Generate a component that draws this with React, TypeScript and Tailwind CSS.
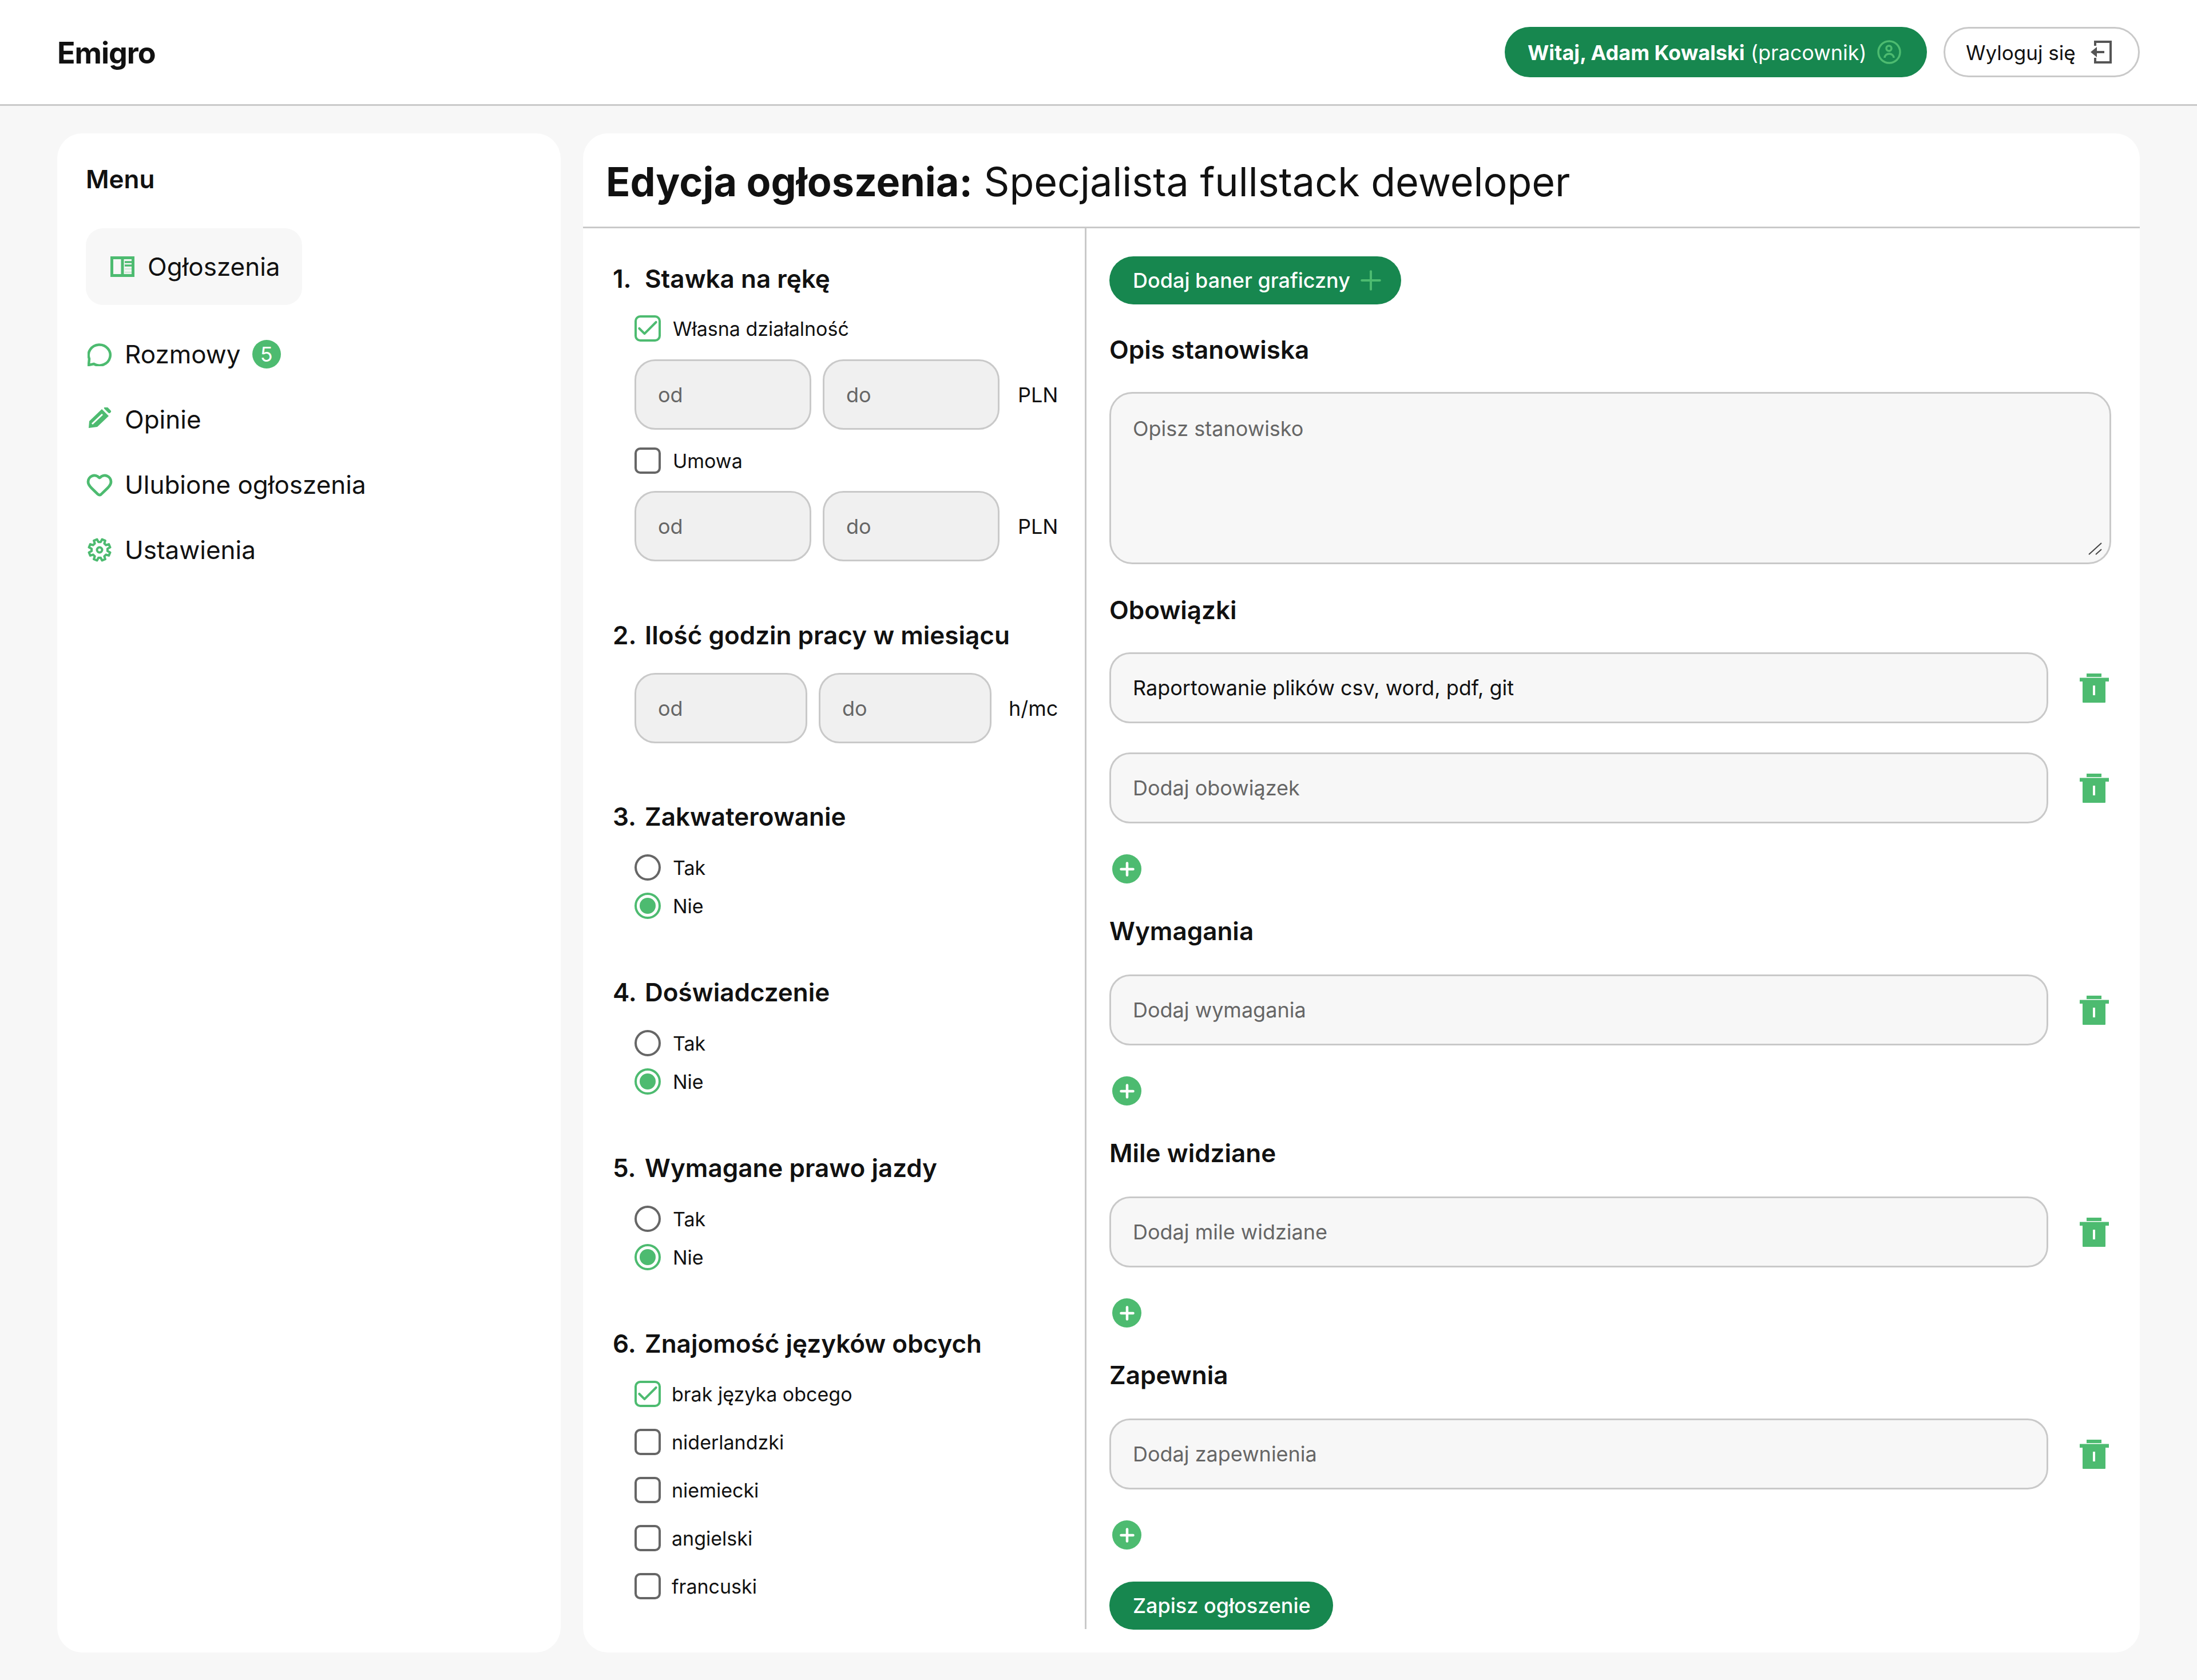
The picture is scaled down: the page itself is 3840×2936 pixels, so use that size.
import { Check, Heart, Plus } from 'lucide-react';

// 8-tooth gear outline for the settings item, same look as the source icon
function gearPath() {
  const pt = (r: number, deg: number) => {
    const a = (deg * Math.PI) / 180;
    return `${(21 + r * Math.cos(a)).toFixed(2)} ${(21 + r * Math.sin(a)).toFixed(2)}`;
  };
  const parts: string[] = [];
  for (let i = 0; i < 8; i++) {
    const a = i * 45 + 22.5;
    parts.push(`${pt(14, a - 14)} ${pt(19, a - 9)} ${pt(19, a + 9)} ${pt(14, a + 14)}`);
  }
  return `M${parts.join(' L')} Z`;
}

// Trash icon used next to every list row
function TrashIcon() {
  return (
    <svg viewBox="0 0 51 51" className="h-[51px] w-[51px] fill-[#4dbb70]">
      <rect x="12" y="0" width="26" height="6" />
      <rect x="0" y="7.5" width="51" height="6.5" />
      <path d="M5 14h40v36a1 1 0 0 1-1 1H6a1 1 0 0 1-1-1z" />
      <rect x="23" y="21" width="4" height="17" fill="#fff" />
    </svg>
  );
}

function NumberInput({ label, className }: { label: string; className: string }) {
  return (
    <input
      placeholder={label}
      className={`h-[123px] rounded-[36px] border-[3px] border-[#c9c9c9] bg-[#f0f0f0] pl-[38px] text-[36px] outline-none placeholder:text-[#666] ${className}`}
    />
  );
}

function CheckBox({ checked }: { checked?: boolean }) {
  return (
    <span
      className={`flex h-[46px] w-[46px] shrink-0 items-center justify-center rounded-[10px] border-[4px] ${
        checked ? 'border-[#4dbb70]' : 'border-[#666]'
      }`}
    >
      {checked ? <Check className="h-[44px] w-[44px] shrink-0 text-[#4dbb70]" strokeWidth={2.2} /> : null}
    </span>
  );
}

function RadioPair({ className }: { className: string }) {
  return (
    <div className={`flex flex-col gap-[21px] pl-[38px] ${className}`}>
      <label className="flex h-[46px] items-center gap-[21px] text-[34px]">
        <span className="h-[46px] w-[46px] rounded-full border-[4px] border-[#666]" />
        Tak
      </label>
      <label className="flex h-[46px] items-center gap-[21px] text-[34px]">
        <span className="flex h-[46px] w-[46px] items-center justify-center rounded-full border-[4px] border-[#4dbb70]">
          <span className="h-[28px] w-[28px] rounded-full bg-[#4dbb70]" />
        </span>
        Nie
      </label>
    </div>
  );
}

function Heading({ num, children, className }: { num?: string; children: string; className: string }) {
  return (
    <h2 className={`h-[60px] text-[44px] leading-[60px] font-semibold ${className}`}>
      {num ? <span className="inline-block w-[56px]">{num}</span> : null}
      {children}
    </h2>
  );
}

function ListField({ title, placeholder, className }: { title: string; placeholder: string; className: string }) {
  return (
    <>
      <Heading className={className}>{title}</Heading>
      <Row placeholder={placeholder} className="mt-[46px]" />
      <AddButton />
    </>
  );
}

function Row({ placeholder, value, className }: { placeholder: string; value?: string; className: string }) {
  return (
    <div className={`flex items-center justify-between pr-[4px] ${className}`}>
      <input
        placeholder={placeholder}
        defaultValue={value}
        className="h-[124px] w-[1641px] rounded-[36px] border-[3px] border-[#c9c9c9] bg-[#f7f7f7] pl-[38px] text-[36px] outline-none placeholder:text-[#666]"
      />
      <TrashIcon />
    </div>
  );
}

function AddButton() {
  return (
    <button type="button" className="mt-[54px] ml-[5px] flex h-[51px] w-[51px] items-center justify-center rounded-full bg-[#4dbb70] text-white">
      <Plus className="h-[36px] w-[36px]" strokeWidth={3} />
    </button>
  );
}

const LANGUAGES = ['brak języka obcego', 'niderlandzki', 'niemiecki', 'angielski', 'francuski'];

export default function App() {
  return (
    <div className="min-h-[2936px] bg-[#f7f7f7] font-['Inter',sans-serif] text-[#111]">
      <header className="flex h-[185px] items-center justify-between border-b-[3px] border-[#c9c9c9] bg-white pr-[100px] pl-[100px]">
        <span className="pt-[3px] text-[52px] font-bold tracking-[-0.02em]">Emigro</span>
        <div className="flex items-center gap-[29px]">
          <div className="flex h-[88px] w-[738px] items-center justify-between rounded-full bg-[#17874f] pr-[45px] pl-[40px] text-[36px] text-white">
            <span className="pt-[2px] whitespace-nowrap">
              <b className="font-bold">Witaj, Adam Kowalski</b> (pracownik)
            </span>
            <svg viewBox="0 0 42 42" className="h-[42px] w-[42px] fill-none stroke-[#4dbb70] stroke-[3.5]">
              <circle cx="21" cy="21" r="19" />
              <circle cx="20.5" cy="14.5" r="4.5" />
              <path d="M13 31a8 7 0 0 1 16 0" />
            </svg>
          </div>
          <button
            type="button"
            className="flex h-[88px] w-[343px] items-center justify-between rounded-full border-[3px] border-[#c9c9c9] bg-white pr-[46px] pl-[36px] text-[35px]"
          >
            <span className="pt-[2px]">Wyloguj się</span>
            <svg viewBox="0 0 38 40" className="h-[40px] w-[38px] fill-[#555] stroke-[#555] stroke-[4]">
              <path d="M9 9V2h27v36H9v-8" fill="none" />
              <path d="M12 20h13" fill="none" />
              <path d="M1 20l11-9v18z" stroke="none" />
            </svg>
          </button>
        </div>
      </header>

      <main className="flex gap-[39px] px-[100px] pt-[48px]">
        <aside className="h-[2655px] w-[880px] shrink-0 rounded-[44px] bg-white pt-[52px] pl-[50px]">
          <h2 className="text-[44px] leading-[56px] font-semibold">Menu</h2>
          <div className="mt-[58px] flex h-[134px] w-[378px] items-center gap-[23px] rounded-[30px] bg-[#f7f7f7] pl-[43px] text-[44px]">
            <svg viewBox="0 0 42 36" className="h-[36px] w-[42px] fill-none stroke-[#4dbb70] stroke-[5]">
              <rect x="2.5" y="2.5" width="37" height="31" />
              <path d="M21 2v32" />
              <path d="M25 10h12M25 16h12" strokeWidth="3.5" />
              <path d="M25 22h12M25 28h12" strokeWidth="3" opacity="0.2" />
            </svg>
            Ogłoszenia
          </div>
          <nav className="mt-[58px] flex flex-col gap-[58px] text-[44px]">
            <div className="flex h-[56px] items-center gap-[23px] pl-[3px]">
              <svg viewBox="0 0 42 42" className="h-[42px] w-[42px] fill-none stroke-[#4dbb70] stroke-[4.5]">
                <path d="M11 38l-9 2 1-11A19 18 0 1 1 11 38z" />
              </svg>
              Rozmowy
              <span className="-ml-[3px] flex h-[50px] w-[50px] items-center justify-center rounded-full bg-[#4dbb70] text-[36px] text-white">5</span>
            </div>
            <div className="flex h-[56px] items-center gap-[23px] pl-[3px]">
              <svg viewBox="8 14 42 42" className="h-[42px] w-[42px] fill-[#4dbb70]">
                <path d="M10 50l1-12L33 17l12 12-20 19z" />
                <path d="M16 43L34 26" stroke="#fff" strokeWidth="3" fill="none" />
                <path d="M40 15l6 6" stroke="#4dbb70" strokeWidth="6" strokeLinecap="round" fill="none" />
              </svg>
              Opinie
            </div>
            <div className="flex h-[56px] items-center gap-[23px] pl-[3px]">
              <Heart className="-m-[3px] h-[48px] w-[48px] text-[#4dbb70]" strokeWidth={2.4} />
              Ulubione ogłoszenia
            </div>
            <div className="flex h-[56px] items-center gap-[23px] pl-[3px]">
              <svg viewBox="0 0 42 42" className="h-[42px] w-[42px] fill-none stroke-[#4dbb70] stroke-[4]">
                <path d={gearPath()} strokeLinejoin="round" />
                <circle cx="21" cy="21" r="4.5" />
              </svg>
              Ustawienia
            </div>
          </nav>
        </aside>

        <section className="h-[2655px] w-[2721px] rounded-[44px] bg-white">
          <h1 className="flex h-[166px] items-center border-b-[3px] border-[#c9c9c9] pt-[6px] pl-[40px] text-[70px]">
            <span>
              <b className="font-bold">Edycja ogłoszenia:</b> Specjalista fullstack deweloper
            </span>
          </h1>
          <div className="flex h-[2448px]">
            <div className="w-[880px] shrink-0 border-r-[3px] border-[#c9c9c9] pl-[52px]">
              <Heading num="1." className="mt-[58px]">Stawka na rękę</Heading>
              <label className="mt-[34px] ml-[38px] flex h-[46px] items-center gap-[21px] text-[34px]">
                <CheckBox checked />
                Własna działalność
              </label>
              <div className="mt-[31px] ml-[38px] flex items-center gap-[20px]">
                <NumberInput label="od" className="w-[309px]" />
                <NumberInput label="do" className="w-[309px]" />
                <span className="ml-[12px] text-[36px]">PLN</span>
              </div>
              <label className="mt-[31px] ml-[38px] flex h-[46px] items-center gap-[21px] text-[34px]">
                <CheckBox />
                Umowa
              </label>
              <div className="mt-[30px] ml-[38px] flex items-center gap-[20px]">
                <NumberInput label="od" className="w-[309px]" />
                <NumberInput label="do" className="w-[309px]" />
                <span className="ml-[12px] text-[36px]">PLN</span>
              </div>

              <Heading num="2." className="mt-[99px]">Ilość godzin pracy w miesiącu</Heading>
              <div className="mt-[36px] ml-[38px] flex items-center gap-[20px]">
                <NumberInput label="od" className="w-[302px]" />
                <NumberInput label="do" className="w-[302px]" />
                <span className="ml-[10px] text-[36px]">h/mc</span>
              </div>

              <Heading num="3." className="mt-[98px]">Zakwaterowanie</Heading>
              <RadioPair className="mt-[36px]" />
              <Heading num="4." className="mt-[98px]">Doświadczenie</Heading>
              <RadioPair className="mt-[36px]" />
              <Heading num="5." className="mt-[98px]">Wymagane prawo jazdy</Heading>
              <RadioPair className="mt-[36px]" />
              <Heading num="6." className="mt-[98px]">Znajomość języków obcych</Heading>
              <ul className="mt-[35px] ml-[38px] flex flex-col gap-[38px]">
                {LANGUAGES.map((name, i) => (
                  <li key={name} className="flex h-[46px] items-center gap-[19px] text-[34px]">
                    <CheckBox checked={i === 0} />
                    {name}
                  </li>
                ))}
              </ul>
            </div>

            <div className="min-w-0 flex-1 pt-[49px] pr-[50px] pl-[40px]">
              <button type="button" className="flex h-[84px] w-[510px] items-center gap-[9px] rounded-full bg-[#17874f] pl-[41px] text-[36px] font-medium text-white">
                Dodaj baner graficzny
                <Plus className="h-[54px] w-[54px] text-[#4dbb70]" strokeWidth={1.8} />
              </button>
              <Heading className="mt-[49px]">Opis stanowiska</Heading>
              <div className="relative mt-[44px]">
                <textarea
                  placeholder="Opisz stanowisko"
                  className="block h-[301px] w-full resize-none rounded-[40px] border-[3px] border-[#c9c9c9] bg-[#f7f7f7] pt-[34px] pl-[38px] text-[36px] outline-none placeholder:text-[#666]"
                />
                <svg viewBox="0 0 24 22" className="absolute right-[16px] bottom-[16px] h-[22px] w-[24px] stroke-[#444] stroke-[2]">
                  <path d="M1 21L23 1M13 21L23 12" />
                </svg>
              </div>
              <Heading className="mt-[50px]">Obowiązki</Heading>
              <Row placeholder="" value="Raportowanie plików csv, word, pdf, git" className="mt-[44px]" />
              <Row placeholder="Dodaj obowiązek" className="mt-[51px]" />
              <AddButton />
              <ListField title="Wymagania" placeholder="Dodaj wymagania" className="mt-[53px]" />
              <ListField title="Mile widziane" placeholder="Dodaj mile widziane" className="mt-[53px]" />
              <ListField title="Zapewnia" placeholder="Dodaj zapewnienia" className="mt-[53px]" />
              <button type="button" className="mt-[56px] block h-[84px] w-[391px] rounded-full bg-[#17874f] pl-[41px] text-left text-[36px] font-medium text-white">
                Zapisz ogłoszenie
              </button>
            </div>
          </div>
        </section>
      </main>
    </div>
  );
}
